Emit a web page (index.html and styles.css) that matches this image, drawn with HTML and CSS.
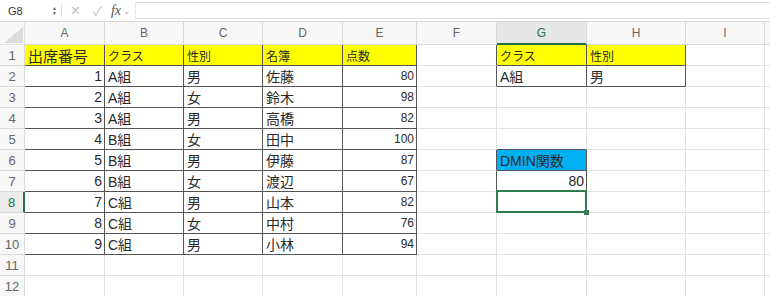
FILE: index.html
```html
<!DOCTYPE html>
<html lang="ja">
<head>
  <meta charset="UTF-8" />
  <title>DMIN関数</title>
  <link rel="stylesheet" href="styles.css">
</head>
<body>

<div class="toolbar">
  <div class="namebox">
    <span>G8</span>
    <span class="spin">▲<br>▼</span>
  </div>
  <span class="tool cancel">✕</span>
  <span class="tool ok">✓</span>
  <span class="fx">fx</span>
  <span class="chev">⌄</span>
  <div class="formula"></div>
</div>

<div class="sheet">
  <!-- column headers -->
  <div class="corner"></div>
  <div class="colhead">A</div>
  <div class="colhead">B</div>
  <div class="colhead">C</div>
  <div class="colhead">D</div>
  <div class="colhead">E</div>
  <div class="colhead">F</div>
  <div class="colhead active">G</div>
  <div class="colhead">H</div>
  <div class="colhead">I</div>
  <div class="colhead"></div>

  <!-- row 1 -->
  <div class="rowhead">1</div>
  <div class="cell dark yellow big">出席番号</div>
  <div class="cell dark yellow small">クラス</div>
  <div class="cell dark yellow small">性別</div>
  <div class="cell dark yellow small">名簿</div>
  <div class="cell dark yellow small">点数</div>
  <div class="cell dark-r"></div>
  <div class="cell dark yellow small">クラス</div>
  <div class="cell dark yellow small">性別</div>
  <div class="cell"></div>
  <div class="cell"></div>

  <!-- row 2 -->
  <div class="rowhead">2</div>
  <div class="cell dark num">1</div>
  <div class="cell dark">A組</div>
  <div class="cell dark">男</div>
  <div class="cell dark">佐藤</div>
  <div class="cell dark num small">80</div>
  <div class="cell dark-r"></div>
  <div class="cell dark">A組</div>
  <div class="cell dark">男</div>
  <div class="cell"></div>
  <div class="cell"></div>

  <!-- row 3 -->
  <div class="rowhead">3</div>
  <div class="cell dark num">2</div>
  <div class="cell dark">A組</div>
  <div class="cell dark">女</div>
  <div class="cell dark">鈴木</div>
  <div class="cell dark num small">98</div>
  <div class="cell"></div>
  <div class="cell"></div>
  <div class="cell"></div>
  <div class="cell"></div>
  <div class="cell"></div>

  <!-- row 4 -->
  <div class="rowhead">4</div>
  <div class="cell dark num">3</div>
  <div class="cell dark">A組</div>
  <div class="cell dark">男</div>
  <div class="cell dark">高橋</div>
  <div class="cell dark num small">82</div>
  <div class="cell"></div>
  <div class="cell"></div>
  <div class="cell"></div>
  <div class="cell"></div>
  <div class="cell"></div>

  <!-- row 5 -->
  <div class="rowhead">5</div>
  <div class="cell dark num">4</div>
  <div class="cell dark">B組</div>
  <div class="cell dark">女</div>
  <div class="cell dark">田中</div>
  <div class="cell dark num small">100</div>
  <div class="cell"></div>
  <div class="cell dark-b"></div>
  <div class="cell"></div>
  <div class="cell"></div>
  <div class="cell"></div>

  <!-- row 6 -->
  <div class="rowhead">6</div>
  <div class="cell dark num">5</div>
  <div class="cell dark">B組</div>
  <div class="cell dark">男</div>
  <div class="cell dark">伊藤</div>
  <div class="cell dark num small">87</div>
  <div class="cell dark-r"></div>
  <div class="cell dark blue">DMIN関数</div>
  <div class="cell"></div>
  <div class="cell"></div>
  <div class="cell"></div>

  <!-- row 7 -->
  <div class="rowhead">7</div>
  <div class="cell dark num">6</div>
  <div class="cell dark">B組</div>
  <div class="cell dark">女</div>
  <div class="cell dark">渡辺</div>
  <div class="cell dark num small">67</div>
  <div class="cell dark-r"></div>
  <div class="cell dark num result">80</div>
  <div class="cell"></div>
  <div class="cell"></div>
  <div class="cell"></div>

  <!-- row 8 -->
  <div class="rowhead active">8</div>
  <div class="cell dark num">7</div>
  <div class="cell dark">C組</div>
  <div class="cell dark">男</div>
  <div class="cell dark">山本</div>
  <div class="cell dark num small">82</div>
  <div class="cell"></div>
  <div class="cell selected"></div>
  <div class="cell"></div>
  <div class="cell"></div>
  <div class="cell"></div>

  <!-- row 9 -->
  <div class="rowhead">9</div>
  <div class="cell dark num">8</div>
  <div class="cell dark">C組</div>
  <div class="cell dark">女</div>
  <div class="cell dark">中村</div>
  <div class="cell dark num small">76</div>
  <div class="cell"></div>
  <div class="cell"></div>
  <div class="cell"></div>
  <div class="cell"></div>
  <div class="cell"></div>

  <!-- row 10 -->
  <div class="rowhead">10</div>
  <div class="cell dark num">9</div>
  <div class="cell dark">C組</div>
  <div class="cell dark">男</div>
  <div class="cell dark">小林</div>
  <div class="cell dark num small">94</div>
  <div class="cell"></div>
  <div class="cell"></div>
  <div class="cell"></div>
  <div class="cell"></div>
  <div class="cell"></div>

  <!-- row 11 -->
  <div class="rowhead">11</div>
  <div class="cell"></div>
  <div class="cell"></div>
  <div class="cell"></div>
  <div class="cell"></div>
  <div class="cell"></div>
  <div class="cell"></div>
  <div class="cell"></div>
  <div class="cell"></div>
  <div class="cell"></div>
  <div class="cell"></div>

  <!-- row 12 -->
  <div class="rowhead">12</div>
  <div class="cell"></div>
  <div class="cell"></div>
  <div class="cell"></div>
  <div class="cell"></div>
  <div class="cell"></div>
  <div class="cell"></div>
  <div class="cell"></div>
  <div class="cell"></div>
  <div class="cell"></div>
  <div class="cell"></div>
</div>

</body>
</html>
```

FILE: styles.css
```css
html, body {
  margin: 0;
  padding: 0;
  background: #fff;
  color: #2a2a2a;
  font-family: "Liberation Sans", "Noto Sans CJK JP", sans-serif;
  overflow: hidden;
}

/* formula bar */
.toolbar {
  height: 22px;
  display: flex;
  align-items: center;
  box-sizing: border-box;
  border-bottom: 1px solid #d6d6d6;
  background: #fff;
}
.namebox {
  width: 59px;
  height: 15px;
  margin-left: 3px;
  display: flex;
  align-items: center;
  justify-content: space-between;
  box-sizing: border-box;
  border-right: 1px solid #e4e4e4;
  font-size: 11px;
  padding: 0 4px 0 5px;
  color: #333;
}
.spin {
  font-size: 5px;
  line-height: 5px;
  color: #666;
  text-align: center;
}
.tool {
  color: #c4c4c4;
  font-size: 13px;
}
.cancel { margin-left: 8px; }
.ok { margin-left: 12px; }
.fx {
  margin-left: 9px;
  font-family: "Liberation Serif", serif;
  font-style: italic;
  font-size: 14px;
  color: #555;
}
.chev {
  margin-left: 2px;
  font-size: 9px;
  color: #aaa;
}
.formula {
  flex: 1;
  height: 17px;
  margin-left: 4px;
  box-sizing: border-box;
  border-top: 1px solid #dedede;
  border-bottom: 1px solid #dedede;
  border-left: 1px solid #e8e8e8;
}

/* sheet grid */
.sheet {
  display: grid;
  grid-template-columns: 25px 80px 79px 79px 80px 74px 80px 90px 99px 79px 1fr;
  grid-template-rows: 23px;
  grid-auto-rows: 21px;
}
.sheet > div {
  box-sizing: border-box;
  border-right: 1px solid #e2e2e2;
  border-bottom: 1px solid #e2e2e2;
}
.corner {
  background: #f7f7f7 linear-gradient(to top left, #dcdcdc 0 50%, transparent 50%) no-repeat;
  background-size: 19px 16px;
  background-position: right 1px bottom 1px;
}
.sheet > .colhead {
  background: #f7f7f7;
  color: #666;
  font-size: 12px;
  display: flex;
  align-items: center;
  justify-content: center;
  border-color: #dadada;
}
.sheet > .colhead.active {
  background: #e6e6e6;
  color: #217346;
  border-bottom: 2px solid #217346;
}
.sheet > .rowhead {
  background: #f7f7f7;
  color: #666;
  font-size: 13px;
  display: flex;
  align-items: center;
  justify-content: center;
  border-color: #dadada;
}
.sheet > .rowhead.active {
  background: #ececec;
  color: #217346;
  border-right: 2px solid #217346;
}

.cell {
  display: flex;
  align-items: center;
  padding: 0 2px 0 3px;
  font-size: 14px;
  white-space: nowrap;
  position: relative;
}
.sheet > .dark {
  border-right-color: #555;
  border-bottom-color: #555;
}
.sheet > .dark-r { border-right-color: #555; }
.sheet > .dark-b { border-bottom-color: #555; }

.yellow { background: #ffff00; }
.blue { background: #00b0f0; }
.num { justify-content: flex-end; }
.big { font-size: 15px; }
.small { font-size: 12px; }
.result { font-size: 14px; }

.selected::after {
  content: "";
  position: absolute;
  top: -2px;
  left: -1px;
  right: -1px;
  bottom: -1px;
  border: 2px solid #2f7d4f;
}
.selected::before {
  content: "";
  position: absolute;
  right: -3px;
  bottom: -3px;
  width: 5px;
  height: 5px;
  background: #2f7d4f;
  z-index: 1;
}
```
